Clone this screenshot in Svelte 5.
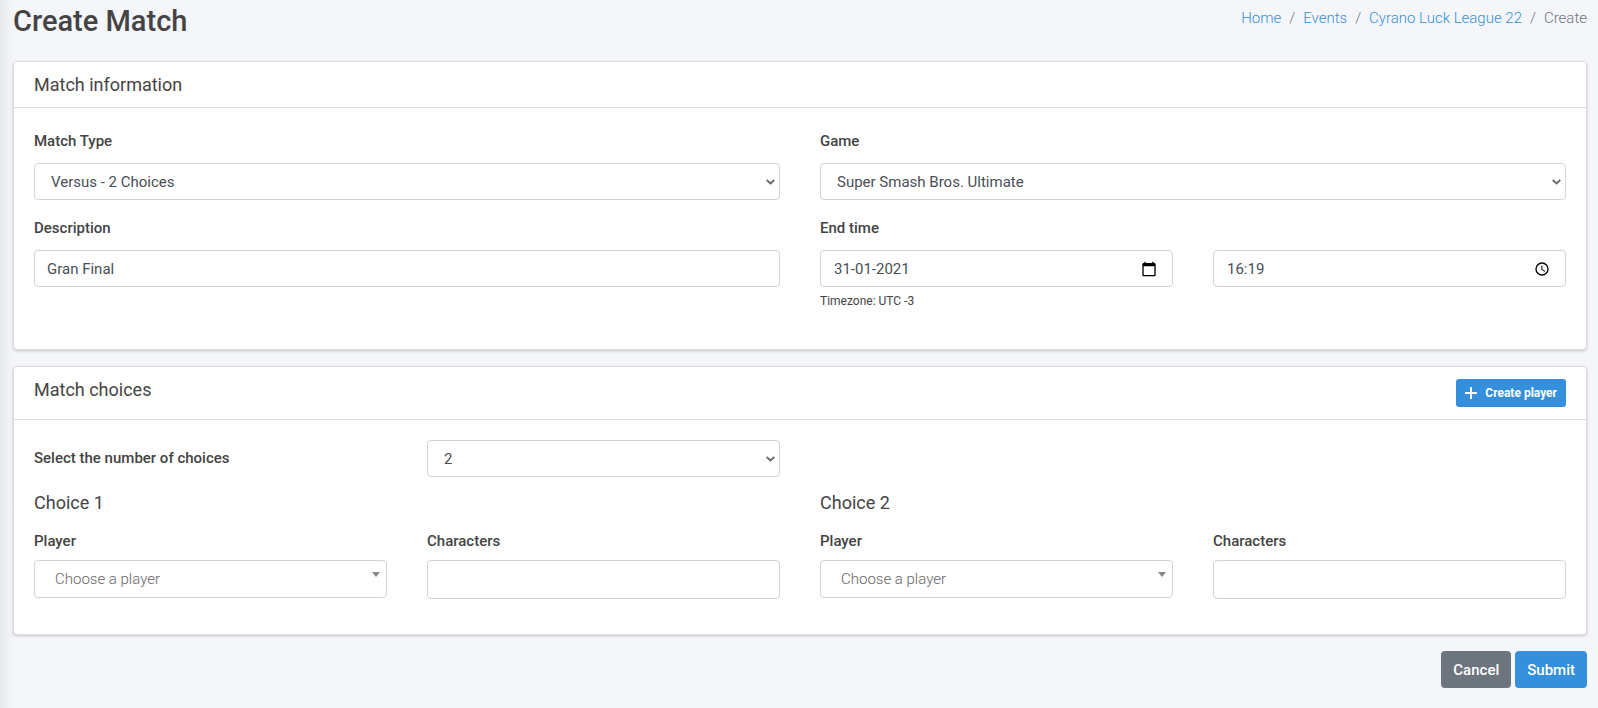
<script>
	let matchType = 'versus-2';
	let game = 'ssbu';
	let description = 'Gran Final';
	let endDate = '31-01-2021';
	let endTime = '16:19';
	let numChoices = 2;

	const breadcrumbs = ['Home', 'Events', 'Cyrano Luck League 22'];

	let choices = [];
	$: choices = Array.from({ length: numChoices }, (_, i) => i + 1);
</script>

<div class="page">
	<header class="page-header">
		<h1>Create Match</h1>
		<nav aria-label="breadcrumb">
			<ol>
				{#each breadcrumbs as crumb}
					<li><a href="#top">{crumb}</a></li>
				{/each}
				<li class="active">Create</li>
			</ol>
		</nav>
	</header>

	<form on:submit|preventDefault>
		<section class="card">
			<div class="card-header">
				<h2>Match information</h2>
			</div>
			<div class="card-body info">
				<div class="field">
					<label for="match-type">Match Type</label>
					<select id="match-type" class="control" bind:value={matchType}>
						<option value="versus-2">Versus - 2 Choices</option>
					</select>
				</div>
				<div class="field">
					<label for="game">Game</label>
					<select id="game" class="control" bind:value={game}>
						<option value="ssbu">Super Smash Bros. Ultimate</option>
					</select>
				</div>
				<div class="field">
					<label for="description">Description</label>
					<input id="description" class="control" type="text" bind:value={description} />
				</div>
				<div class="field">
					<label for="end-date">End time</label>
					<div class="split">
						<div class="control picker">
							<input id="end-date" type="text" bind:value={endDate} />
							<svg viewBox="0 0 24 24" aria-hidden="true">
								<path
									d="M20 3h-1V1h-2v2H7V1H5v2H4c-1.100 0-2 .9-2 2v16c0 1.100.9 2 2 2h16c1.100 0 2-.9 2-2V5c0-1.100-.9-2-2-2zm0 18H4V8h16v13z"
								/>
							</svg>
						</div>
						<div class="control picker">
							<input aria-label="End hour" type="text" bind:value={endTime} />
							<svg viewBox="0 0 24 24" aria-hidden="true">
								<path
									d="M12 2a10 10 0 1 0 0 20 10 10 0 0 0 0-20zm0 18a8 8 0 1 1 0-16 8 8 0 0 1 0 16zm.5-13H11v6l5.200 3.200.8-1.300-4.500-2.700z"
								/>
							</svg>
						</div>
					</div>
					<small>Timezone: UTC -3</small>
				</div>
			</div>
		</section>

		<section class="card">
			<div class="card-header">
				<h2>Match choices</h2>
				<button type="button" class="btn-sm">
					<svg viewBox="0 0 12 12" aria-hidden="true">
						<path
							d="M5.500 0h1q.5 0 .5.500V5h4.500q.5 0 .5.500v1q0 .5-.5.500H7v4.500q0 .5-.5.500h-1q-.5 0-.5-.5V7H.5q-.5 0-.5-.5v-1q0-.5.500-.5H5V.5q0-.5.500-.5z"
						/>
					</svg>
					Create player
				</button>
			</div>
			<div class="card-body choices">
				<div class="split count">
					<label for="num-choices">Select the number of choices</label>
					<select id="num-choices" class="control" bind:value={numChoices}>
						<option value={2}>2</option>
					</select>
				</div>
				<div class="choice-list">
					{#each choices as n (n)}
						<div class="choice">
							<h3>Choice {n}</h3>
							<div class="split">
								<div>
									<label for="player-{n}">Player</label>
									<div class="player">
										<select id="player-{n}" class="control">
											<option value="">Choose a player</option>
										</select>
									</div>
								</div>
								<div>
									<label for="characters-{n}">Characters</label>
									<input id="characters-{n}" class="control characters" type="text" />
								</div>
							</div>
						</div>
					{/each}
				</div>
			</div>
		</section>

		<div class="actions">
			<button type="button" class="btn secondary">Cancel</button>
			<button type="submit" class="btn">Submit</button>
		</div>
	</form>
</div>

<style>
	:global(body) {
		background: #f4f6fa;
	}
	.page,
	.page * {
		box-sizing: border-box;
	}
	.page {
		min-height: 100vh;
		padding: 5px 11px 20px 13px;
		font-family: Roboto, sans-serif;
		font-size: 15px;
		color: #444;
		background: linear-gradient(to right, #e9eaee, #f4f6fa 14px);
	}
	h1,
	h2,
	h3,
	ol {
		margin: 0;
		padding: 0;
	}

	/* page header */
	.page-header {
		display: flex;
		justify-content: space-between;
		align-items: flex-start;
		height: 56px;
	}
	h1 {
		font-size: 29px;
		font-weight: 500;
		line-height: 32px;
	}
	ol {
		display: flex;
		list-style: none;
		font-weight: 300;
		line-height: 26px;
	}
	li + li::before {
		content: '/';
		padding: 0 8px;
		color: #6c757d;
	}
	li a {
		color: #3490dc;
		text-decoration: none;
	}
	.active {
		color: #6c757d;
	}

	/* cards */
	.card {
		margin-bottom: 16px;
		background: #fff;
		border: 1px solid #dcdde1;
		border-radius: 4px;
		box-shadow: 0 1px 3px rgba(0, 0, 0, 0.2);
	}
	.card-header {
		display: flex;
		justify-content: space-between;
		align-items: flex-start;
		padding: 12px 20px;
		border-bottom: 1px solid #dcdddf;
	}
	h2 {
		font-size: 18px;
		font-weight: 400;
		line-height: 21px;
	}
	.card-body {
		padding: 20px;
	}
	.info {
		display: grid;
		grid-template-columns: 1fr 1fr;
		gap: 15px 40px;
		padding-bottom: 39px;
	}
	.split,
	.choice-list {
		display: grid;
		grid-template-columns: 1fr 1fr;
		column-gap: 40px;
	}

	/* fields */
	label {
		display: block;
		font-weight: 500;
		line-height: 27px;
	}
	.field label {
		margin-bottom: 8px;
	}
	.control {
		display: block;
		width: 100%;
		height: 37px;
		padding: 6px 12px;
		font: inherit;
		color: #495057;
		background-color: #fff;
		border: 1px solid #ced4da;
		border-radius: 4px;
	}
	select.control {
		padding-left: 16px;
		appearance: none;
		background-image: url("data:image/svg+xml,%3Csvg xmlns='http://www.w3.org/2000/svg' viewBox='0 0 9 6'%3E%3Cpath d='M.7 1l3.800 3.500L8.300 1' fill='none' stroke='%23666' stroke-width='1.700'/%3E%3C/svg%3E");
		background-repeat: no-repeat;
		background-position: right 4px center;
		background-size: 9px 6px;
	}
	.picker {
		display: flex;
		align-items: center;
		padding-right: 15px;
	}
	.picker input {
		flex: 1;
		min-width: 0;
		padding: 0 1px;
		font: inherit;
		color: inherit;
		background: none;
		border: 0;
		outline: 0;
	}
	.picker svg {
		width: 16px;
		height: 16px;
		fill: #000;
	}
	small {
		display: block;
		margin-top: 5px;
		font-size: 12px;
		line-height: 18px;
	}

	/* choices */
	.choices {
		padding-bottom: 35px;
	}
	.count {
		width: calc(50% - 20px);
		align-items: center;
		margin-bottom: 15px;
	}
	h3 {
		margin-bottom: 14px;
		font-size: 18px;
		font-weight: 400;
		line-height: 22px;
	}
	.choice label {
		margin-bottom: 5px;
	}
	.player {
		position: relative;
	}
	.player select.control {
		height: 38px;
		padding-left: 20px;
		font-weight: 300;
		color: #666;
		background-image: none;
	}
	.player::after {
		content: '';
		position: absolute;
		top: 12px;
		right: 7px;
		border: 4px solid transparent;
		border-top: 5px solid #888;
		border-bottom: 0;
		pointer-events: none;
	}
	.characters {
		height: 39px;
	}

	/* buttons */
	button {
		font-family: inherit;
		color: #fff;
		background: #3490dc;
		border: 0;
		cursor: pointer;
	}
	.btn-sm {
		display: flex;
		align-items: center;
		gap: 8px;
		height: 28px;
		padding: 0 9px;
		font-size: 12px;
		font-weight: 700;
		border-radius: 3px;
	}
	.btn-sm svg {
		width: 12px;
		height: 12px;
		fill: #fff;
	}
	.actions {
		display: flex;
		justify-content: flex-end;
		gap: 4px;
	}
	.btn {
		height: 37px;
		padding: 0 12px;
		font-size: 15px;
		font-weight: 500;
		border-radius: 4px;
	}
	.secondary {
		background: #6c757d;
	}
</style>
